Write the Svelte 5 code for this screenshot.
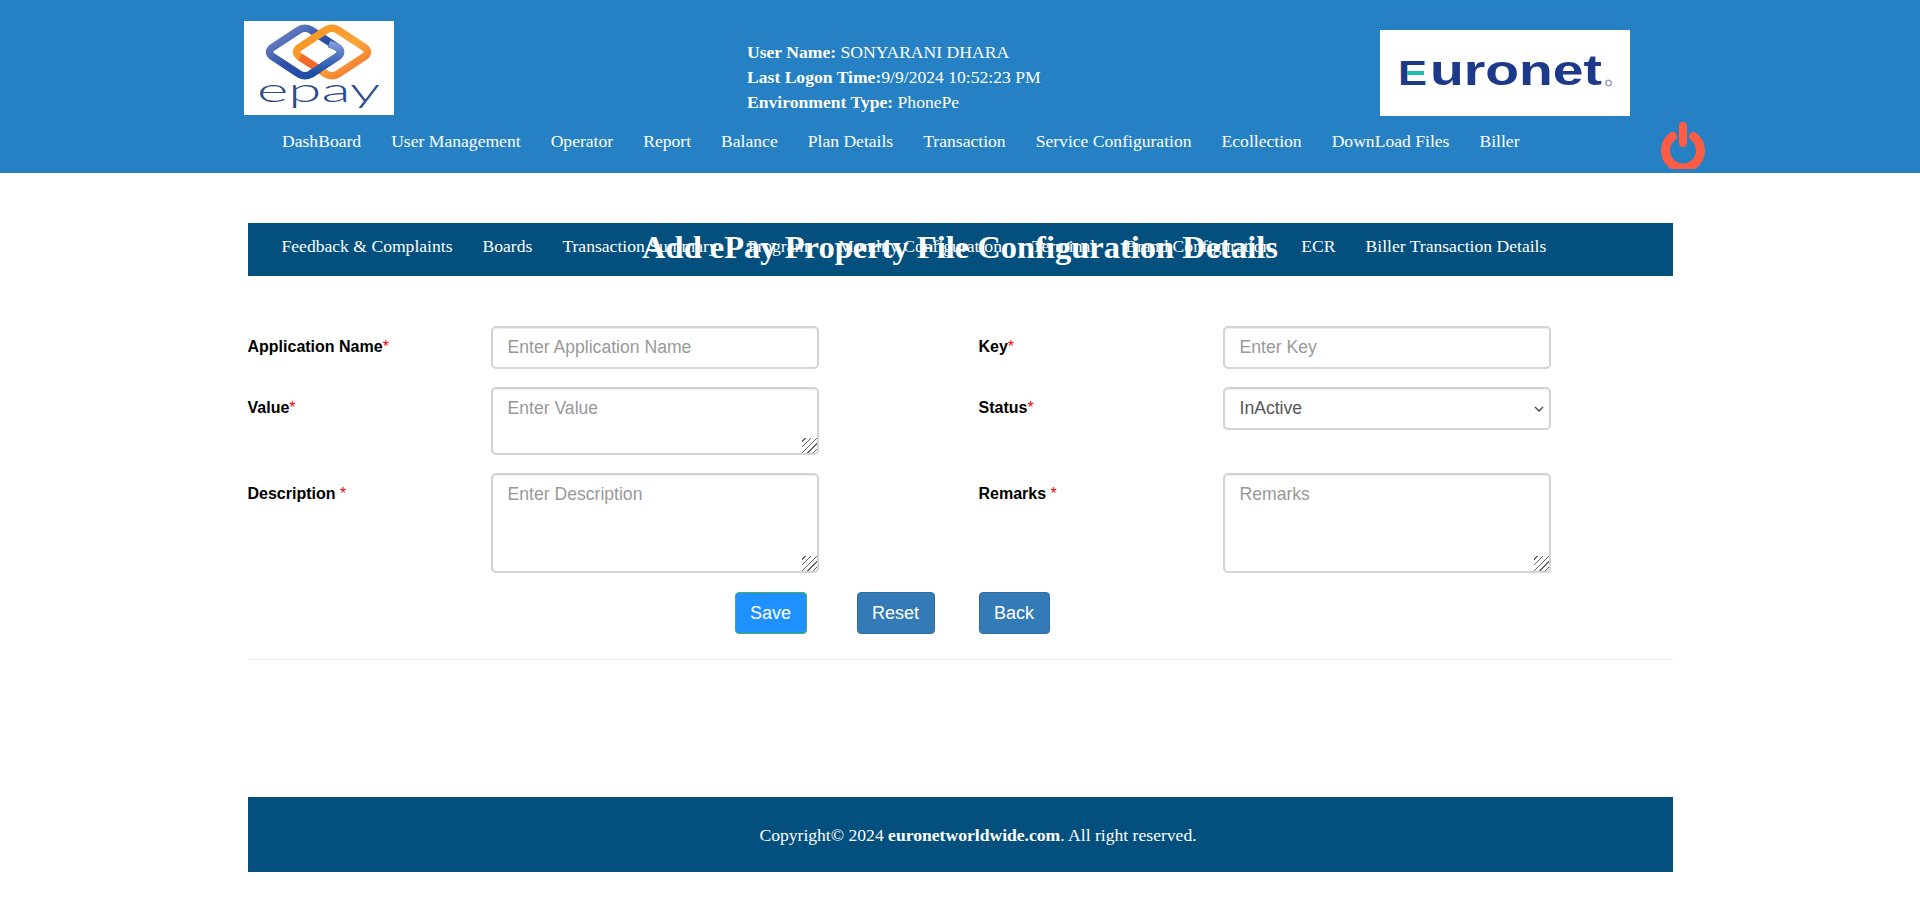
<script lang="ts">
    const mainNav = ['DashBoard', 'User Management', 'Operator', 'Report', 'Balance', 'Plan Details', 'Transaction', 'Service Configuration', 'Ecollection', 'DownLoad Files', 'Biller'];
    const subNav = ['Feedback & Complaints', 'Boards', 'Transaction Summary', 'Program', 'Monthly Configuration', 'Terminal', 'Brand Configuration', 'ECR', 'Biller Transaction Details'];

    let status = $state('InActive');
</script>

<header class="top">
    <div class="brand-row">
        <svg class="epay-logo" viewBox="0 0 150 94" role="img" aria-label="epay logo">
            <defs>
                <linearGradient id="blueRing" x1="0" y1="0" x2="1" y2="1">
                    <stop offset="0" stop-color="#7d8fc9" />
                    <stop offset="0.5" stop-color="#2b4ea8" />
                    <stop offset="1" stop-color="#1c4fa6" />
                </linearGradient>
                <linearGradient id="blueInner" x1="0" y1="0" x2="0" y2="1">
                    <stop offset="0" stop-color="#7f9ad6" />
                    <stop offset="0.4" stop-color="#4f74c0" />
                    <stop offset="1" stop-color="#1a4da3" />
                </linearGradient>
                <linearGradient id="orangeRing" x1="0" y1="0" x2="1" y2="1">
                    <stop offset="0" stop-color="#f7931e" />
                    <stop offset="0.6" stop-color="#fba43a" />
                    <stop offset="1" stop-color="#f1662a" />
                </linearGradient>
            </defs>
            <rect width="150" height="94" fill="#fff" />
            <path d="M55 9Q61 5.500 67 9L93 26Q100 31 93 36L67 53Q61 56.500 55 53L29 36Q22 31 29 26Z" fill="none" stroke="url(#blueRing)" stroke-width="7.500" />
            <path d="M82 9Q88 5.500 94 9L120 26Q127 31 120 36L94 53Q88 56.500 82 53L56 36Q49 31 56 26Z" fill="none" stroke="url(#orangeRing)" stroke-width="7.500" />
            <path d="M56 36L78 50" fill="none" stroke="#f4682a" stroke-width="7.500" />
            <path d="M85 23L93 26Q100 31 93 36L67 53" fill="none" stroke="url(#blueInner)" stroke-width="7.500" />
            <text x="13" y="81" class="epay-word" textLength="123" lengthAdjust="spacingAndGlyphs">epay</text>
        </svg>

        <div class="user-info">
            <div><b>User Name:</b> SONYARANI DHARA</div>
            <div><b>Last Logon Time:</b>9/9/2024 10:52:23 PM</div>
            <div><b>Environment Type:</b> PhonePe</div>
        </div>

        <svg class="euronet-logo" viewBox="0 0 250 86" role="img" aria-label="Euronet logo">
            <rect width="250" height="86" fill="#fff" />
            <text x="18" y="55" class="euronet-cap" textLength="29" lengthAdjust="spacingAndGlyphs">E</text>
            <text x="50" y="55" class="euronet-word" textLength="172" lengthAdjust="spacingAndGlyphs">uronet</text>
            <rect x="27" y="41" width="17" height="4" fill="#1fbfb0" />
            <circle cx="228.500" cy="53" r="2.800" fill="none" stroke="#9aa4cf" stroke-width="1.500" />
        </svg>
    </div>

    <div class="nav-row">
        <nav class="nav">
            {#each mainNav as item}
                <a href="#top">{item}</a>
            {/each}
        </nav>
        <svg class="power" viewBox="0 0 44 47" role="img" aria-label="Log out">
            <path d="M11.500 14.500a17.500 17.500 0 1 0 21 0" fill="none" stroke="#ff5c45" stroke-width="9" stroke-linecap="round" />
            <line x1="22" y1="4" x2="22" y2="21" stroke="#ff5c45" stroke-width="8" stroke-linecap="round" />
        </svg>
    </div>
</header>

<main class="page">
    <div class="sub-wrap">
        <nav class="nav sub-nav">
            {#each subNav as item}
                <a href="#top">{item}</a>
            {/each}
        </nav>
        <h2 class="title">Add ePay Property File Configuration Details</h2>
    </div>

    <form class="form">
        <label for="app">Application Name<span class="req">*</span></label>
        <input id="app" placeholder="Enter Application Name" />
        <label for="key">Key<span class="req">*</span></label>
        <input id="key" placeholder="Enter Key" />

        <label for="val">Value<span class="req">*</span></label>
        <textarea id="val" class="short" placeholder="Enter Value"></textarea>
        <label for="status">Status<span class="req">*</span></label>
        <select id="status" bind:value={status}>
            <option>Active</option>
            <option>InActive</option>
        </select>

        <label for="desc">Description <span class="req">*</span></label>
        <textarea id="desc" class="tall" placeholder="Enter Description"></textarea>
        <label for="rem">Remarks <span class="req">*</span></label>
        <textarea id="rem" class="tall" placeholder="Remarks"></textarea>
    </form>

    <div class="actions">
        <button type="button" class="btn save">Save</button>
        <button type="button" class="btn reset">Reset</button>
        <button type="button" class="btn back">Back</button>
    </div>

    <hr class="rule" />

    <footer class="footer">Copyright© 2024 <b>euronetworldwide.com</b>. All right reserved.</footer>
</main>

<style>
    :global(body) {
        margin: 0;
        background: #fff;
        font-family: "Liberation Serif", "Times New Roman", serif;
    }

    .top {
        height: 173px;
        background: #2581c4;
        color: #fff;
        box-sizing: border-box;
        padding-top: 21px;
    }

    .brand-row {
        display: grid;
        grid-template-columns: 503px 633px 250px;
        padding-left: 244px;
        height: 95px;
    }
    .epay-logo {
        width: 150px;
        height: 94px;
        display: block;
    }
    .epay-word {
        font-family: Lato, "Open Sans", sans-serif;
        font-weight: 300;
        font-size: 34px;
        fill: #2c4a8c;
    }
    .euronet-logo {
        width: 250px;
        height: 86px;
        margin-top: 9px;
        display: block;
    }
    .euronet-cap {
        font-family: "Liberation Sans", sans-serif;
        font-weight: 700;
        font-size: 35px;
        fill: #1d3a8a;
    }
    .euronet-word {
        font-family: "Liberation Sans", sans-serif;
        font-weight: 700;
        font-size: 43px;
        fill: #1d3a8a;
    }
    .user-info {
        font-size: 17.6px;
        line-height: 25px;
        padding-top: 19px;
    }

    .nav-row {
        display: flex;
        align-items: flex-start;
        padding: 6px 215px 0 282px;
    }
    .nav {
        display: flex;
        gap: 30px;
        font-size: 17.6px;
        line-height: 38px;
    }
    .nav a {
        color: #fff;
        text-decoration: none;
        white-space: nowrap;
    }
    .power {
        width: 44px;
        height: 47px;
        margin-left: auto;
    }

    .page {
        width: 1425px;
        margin: 0 auto;
        padding-top: 50px;
        font-family: "Liberation Sans", Arial, sans-serif;
    }

    .sub-wrap {
        position: relative;
    }
    .sub-nav {
        background: #03507f;
        height: 53px;
        padding-left: 34px;
        font-family: "Liberation Serif", "Times New Roman", serif;
        line-height: 47px;
    }
    .title {
        position: absolute;
        top: 4px;
        left: 0;
        right: 0;
        margin: 0;
        text-align: center;
        color: #fff;
        font-family: "Liberation Serif", "Times New Roman", serif;
        font-size: 32.5px;
        line-height: 40px;
        font-weight: 700;
        pointer-events: none;
    }

    .form {
        display: grid;
        grid-template-columns: 243px 328px 160px 244px 328px;
        grid-auto-rows: auto;
        row-gap: 18px;
        padding-top: 50px;
    }
    .form label {
        font-size: 16px;
        font-weight: 700;
        color: #000;
        padding-top: 12px;
        line-height: 18px;
    }
    .form label:nth-of-type(even) {
        grid-column: 4;
    }
    .req {
        color: #f00;
        font-weight: 400;
    }
    input, textarea, select {
        box-sizing: border-box;
        width: 100%;
        display: block;
        margin: 0;
        height: 43px;
        padding: 7px 15px;
        font-family: "Liberation Sans", Arial, sans-serif;
        font-size: 17.6px;
        line-height: 25px;
        color: #555;
        background: #fff;
        border: 2px solid #d3d3d3;
        border-radius: 5px;
        box-shadow: inset 0 1px 1px rgba(0, 0, 0, 0.075);
    }
    input::placeholder, textarea::placeholder {
        color: #999;
        opacity: 1;
    }
    textarea::-webkit-resizer {
        background: repeating-linear-gradient(135deg, transparent 0 2px, #666 2px 3px, transparent 3px 4px);
        clip-path: polygon(100% 0, 100% 100%, 0 100%);
    }
    select {
        padding-left: 15px;
        appearance: none;
        background-image: url("data:image/svg+xml,%3Csvg xmlns='http://www.w3.org/2000/svg' width='10' height='6'%3E%3Cpath d='M1 1l4 4 4-4' fill='none' stroke='%23444' stroke-width='1.300'/%3E%3C/svg%3E");
        background-repeat: no-repeat;
        background-position: right 5px center;
    }
    .short {
        height: 68px;
    }
    .tall {
        height: 100px;
    }

    .actions {
        display: flex;
        padding: 19px 0 0 487px;
        height: 42px;
    }
    .btn {
        box-sizing: border-box;
        height: 42px;
        font-family: "Liberation Sans", Arial, sans-serif;
        font-size: 18px;
        color: #fff;
        border-radius: 4px;
        padding: 0;
        border: 1px solid #2e6da4;
        background: #337ab7;
    }
    .save {
        width: 72px;
        margin-right: 50px;
        background: #1e90ff;
        border-color: #4cae4c;
    }
    .reset {
        width: 78px;
        margin-right: 44px;
    }
    .back {
        width: 71px;
    }

    .rule {
        border: 0;
        border-top: 1px solid #eee;
        margin: 25px 0 0;
    }

    .footer {
        margin-top: 137px;
        height: 75px;
        background: #03507f;
        color: #fff;
        box-sizing: border-box;
        padding-left: 36px;
        font-family: "Liberation Serif", "Times New Roman", serif;
        font-size: 17.6px;
        line-height: 76px;
        text-align: center;
    }
</style>
